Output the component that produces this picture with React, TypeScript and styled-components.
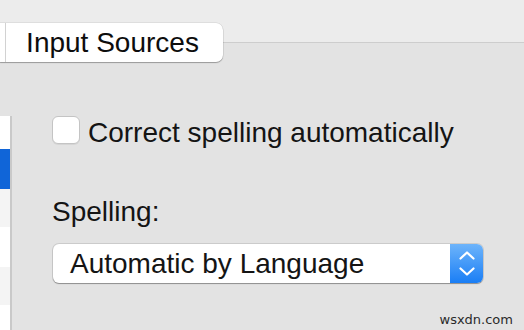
import React from "react";
import styled, { createGlobalStyle } from "styled-components";

const GlobalStyle = createGlobalStyle`
  html, body {
    margin: 0;
    padding: 0;
  }
  body {
    background: linear-gradient(#ececec 0 42px, #cdcdcd 42px 43px, #e3e3e3 43px);
    font-family: "Liberation Sans", Arial, Helvetica, sans-serif;
    color: #141414;
  }
`;

const Page = styled.div`
  position: relative;
  width: 524px;
  height: 330px;
  overflow: hidden;
  display: flex;
  flex-direction: column;
`;

const TabBar = styled.div`
  display: flex;
  padding-top: 23px;
`;

const Segmented = styled.div`
  display: flex;
  height: 39px;
  background: #ffffff;
  border-radius: 0 7px 7px 0;
  box-shadow: 0 1px 1px rgba(0, 0, 0, 0.28), 0 0 0 0.5px rgba(0, 0, 0, 0.12);
`;

const Segment = styled.div<{ $w: number; $divider?: boolean }>`
  width: ${(p) => p.$w}px;
  box-sizing: border-box;
  display: flex;
  align-items: center;
  justify-content: center;
  padding-right: ${(p) => (p.$divider ? 0 : 4)}px;
  font-size: 28px;
  line-height: 39px;
  color: #0d0d0d;
  border-right: ${(p) => (p.$divider ? "1px solid #d2d2d2" : "none")};
`;

const Body = styled.div`
  flex: 1;
  display: flex;
  margin-top: 54px;
`;

const Sidebar = styled.div`
  width: 10px;
  border-right: 2px solid #c9c9c9;
  display: flex;
  flex-direction: column;
`;

const ListRow = styled.div<{ $h: number; $tone: "white" | "alt" | "sel" }>`
  height: ${(p) => p.$h}px;
  flex-shrink: 0;
  background: ${(p) =>
    p.$tone === "sel" ? "#1065d8" : p.$tone === "alt" ? "#f4f4f4" : "#ffffff"};
`;

const Main = styled.div`
  flex: 1;
  display: flex;
  flex-direction: column;
  padding-left: 40px;
`;

const CheckRow = styled.label`
  display: flex;
  align-items: flex-start;
  gap: 8px;
`;

const CheckBox = styled.span`
  width: 28px;
  height: 28px;
  box-sizing: border-box;
  border-radius: 6px;
  background: #ffffff;
  border: 1px solid #c4c4c4;
  box-shadow: 0 1px 0 rgba(0, 0, 0, 0.06);
  flex-shrink: 0;
`;

const Label = styled.span`
  font-size: 28px;
  line-height: 33px;
  color: #141414;
`;

const Heading = styled.div`
  margin-top: 47px;
  font-size: 28px;
  line-height: 32px;
  color: #141414;
`;

const Popup = styled.div`
  margin-top: 16px;
  margin-left: 1px;
  width: 430px;
  height: 39px;
  box-sizing: border-box;
  display: flex;
  background: #ffffff;
  border-radius: 6px;
  box-shadow: 0 0 0 1px rgba(0, 0, 0, 0.1), 0 1px 1px rgba(0, 0, 0, 0.3);
  overflow: hidden;
`;

const PopupText = styled.div`
  flex: 1;
  padding-left: 17px;
  font-size: 28px;
  line-height: 39px;
  color: #141414;
  white-space: nowrap;
`;

const Stepper = styled.div`
  width: 33px;
  display: flex;
  flex-direction: column;
  align-items: center;
  justify-content: center;
  gap: 7px;
  background: linear-gradient(#6db4fb, #1a7ef5);
`;

const Watermark = styled.div`
  position: absolute;
  right: 11px;
  bottom: 3px;
  font-family: "DejaVu Sans", "Liberation Sans", sans-serif;
  font-size: 13px;
  color: #2a2a2a;
`;

const Chevron = ({ up }: { up?: boolean }) => (
  <svg width="16" height="9" viewBox="0 0 16 9">
    <path
      d={up ? "M1.5 7.5 L8 1.5 L14.5 7.5" : "M1.5 1.5 L8 7.5 L14.5 1.5"}
      fill="none"
      stroke="#ffffff"
      strokeWidth="2.2"
      strokeLinecap="round"
      strokeLinejoin="round"
    />
  </svg>
);

export default function App() {
  return (
    <>
      <GlobalStyle />
      <Page>
        <TabBar>
          <Segmented>
            <Segment $w={6} $divider />
            <Segment $w={217}>Input Sources</Segment>
          </Segmented>
        </TabBar>
        <Body>
          <Sidebar>
            <ListRow $h={33} $tone="white" />
            <ListRow $h={40} $tone="sel" />
            <ListRow $h={38} $tone="alt" />
            <ListRow $h={40} $tone="white" />
            <ListRow $h={38} $tone="alt" />
            <ListRow $h={40} $tone="white" />
          </Sidebar>
          <Main>
            <CheckRow>
              <CheckBox />
              <Label>Correct spelling automatically</Label>
            </CheckRow>
            <Heading>Spelling:</Heading>
            <Popup>
              <PopupText>Automatic by Language</PopupText>
              <Stepper>
                <Chevron up />
                <Chevron />
              </Stepper>
            </Popup>
          </Main>
        </Body>
        <Watermark>wsxdn.com</Watermark>
      </Page>
    </>
  );
}
